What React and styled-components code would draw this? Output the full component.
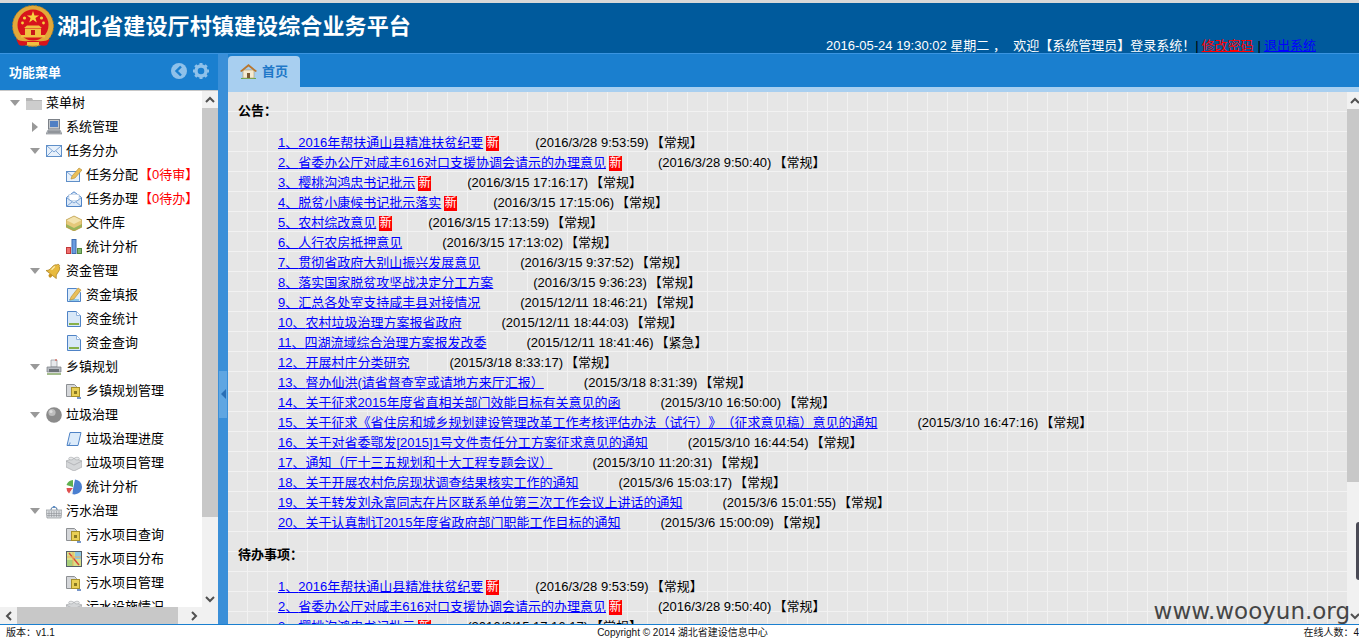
import React from 'react';
import styled, { createGlobalStyle } from 'styled-components';

const FONT = '"Liberation Sans", "Noto Sans CJK SC", sans-serif';

const GlobalStyle = createGlobalStyle`
  html, body { margin: 0; padding: 0; overflow: hidden; background: #fff; }
  body { font-family: ${FONT}; font-size: 13px; color: #000; text-spacing-trim: space-all; }
`;

const notices = [
  ['2016年帮扶通山县精准扶贫纪要', '(2016/3/28 9:53:59)', '常规', true],
  ['省委办公厅对咸丰616对口支援协调会请示的办理意见', '(2016/3/28 9:50:40)', '常规', true],
  ['樱桃沟鸿忠书记批示', '(2016/3/15 17:16:17)', '常规', true],
  ['脱贫小康候书记批示落实', '(2016/3/15 17:15:06)', '常规', true],
  ['农村综改意见', '(2016/3/15 17:13:59)', '常规', true],
  ['人行农房抵押意见', '(2016/3/15 17:13:02)', '常规'],
  ['贯彻省政府大别山振兴发展意见', '(2016/3/15 9:37:52)', '常规'],
  ['落实国家脱贫攻坚战决定分工方案', '(2016/3/15 9:36:23)', '常规'],
  ['汇总各处室支持咸丰县对接情况', '(2015/12/11 18:46:21)', '常规'],
  ['农村垃圾治理方案报省政府', '(2015/12/11 18:44:03)', '常规'],
  ['四湖流域综合治理方案报发改委', '(2015/12/11 18:41:46)', '紧急'],
  ['开展村庄分类研究', '(2015/3/18 8:33:17)', '常规'],
  ['督办仙洪(请省督查室或请地方来厅汇报）', '(2015/3/18 8:31:39)', '常规'],
  ['关于征求2015年度省直相关部门效能目标有关意见的函', '(2015/3/10 16:50:00)', '常规'],
  ['关于征求《省住房和城乡规划建设管理改革工作考核评估办法（试行）》（征求意见稿）意见的通知', '(2015/3/10 16:47:16)', '常规'],
  ['关于对省委鄂发[2015]1号文件责任分工方案征求意见的通知', '(2015/3/10 16:44:54)', '常规'],
  ['通知（厅十三五规划和十大工程专题会议）', '(2015/3/10 11:20:31)', '常规'],
  ['关于开展农村危房现状调查结果核实工作的通知', '(2015/3/6 15:03:17)', '常规'],
  ['关于转发刘永富同志在片区联系单位第三次工作会议上讲话的通知', '(2015/3/6 15:01:55)', '常规'],
  ['关于认真制订2015年度省政府部门职能工作目标的通知', '(2015/3/6 15:00:09)', '常规'],
];

const todos = notices.slice(0, 3);

const tree = [
  [0, 'open', 'folder', '菜单树'],
  [1, 'closed', 'computer', '系统管理'],
  [1, 'open', 'mail', '任务分办'],
  [2, '', 'mailPen', '任务分配', '【0待审】'],
  [2, '', 'mailOpen', '任务办理', '【0待办】'],
  [2, '', 'box', '文件库'],
  [2, '', 'bars', '统计分析'],
  [1, 'open', 'bell', '资金管理'],
  [2, '', 'docPen', '资金填报'],
  [2, '', 'doc', '资金统计'],
  [2, '', 'doc', '资金查询'],
  [1, 'open', 'printer', '乡镇规划'],
  [2, '', 'lockDoc', '乡镇规划管理'],
  [1, 'open', 'ball', '垃圾治理'],
  [2, '', 'scroll', '垃圾治理进度'],
  [2, '', 'brick', '垃圾项目管理'],
  [2, '', 'pie', '统计分析'],
  [1, 'open', 'basket', '污水治理'],
  [2, '', 'lockDoc', '污水项目查询'],
  [2, '', 'map', '污水项目分布'],
  [2, '', 'lockDoc', '污水项目管理'],
  [2, '', 'brick', '污水设施情况'],
];

const icons = {
  folder: <>
    <path d="M0 3h6l1 2h9v10H0z" fill="#b5b5b5" />
    <path d="M0 6h16v9H0z" fill="#cdcdcd" />
  </>,
  computer: <>
    <rect x="2.5" y="0.5" width="11" height="9.5" fill="#c4c8cc" stroke="#7c8188" />
    <rect x="4" y="2" width="8" height="6" fill="#4f7fc4" />
    <path d="M2 11h12l2 4H0z" fill="#b4b8bd" stroke="#7c8188" strokeWidth=".6" />
    <path d="M2 13h12" stroke="#6e7278" />
  </>,
  mail: <>
    <rect x=".5" y="2.5" width="15" height="11" fill="#e8f1fb" stroke="#5f8fc8" />
    <path d="M1 3l7 6 7-6M1 13l5-5M15 13l-5-5" fill="none" stroke="#7fa6d6" />
  </>,
  mailPen: <>
    <rect x=".5" y="4.5" width="13" height="10" fill="#e8f1fb" stroke="#5f8fc8" />
    <path d="M1 5l6 5 6-5" fill="none" stroke="#7fa6d6" />
    <path d="M6 9l7-8 3 2-7 8-4 1z" fill="#e9bf5a" stroke="#b58a2c" strokeWidth=".6" />
  </>,
  mailOpen: <>
    <path d="M.5 6.5L8 .8l7.5 5.7v9H.5z" fill="#dce9f8" stroke="#4f83c6" />
    <rect x="3" y="3.5" width="10" height="6" fill="#fff" stroke="#b9cbe2" strokeWidth=".6" />
    <path d="M1 7l7 5 7-5M1 15l5-4M15 15l-5-4" fill="none" stroke="#7fa6d6" />
  </>,
  box: <>
    <path d="M8 1l8 4v7l-8 4-8-4V5z" fill="#e5c87a" />
    <path d="M0 5l8 4 8-4-8-4z" fill="#f3e3ae" />
    <path d="M0 9l8 4 8-4v3l-8 4-8-4z" fill="#9ab55a" />
    <path d="M8 1l8 4v7l-8 4-8-4V5z" fill="none" stroke="#b8963f" strokeWidth=".7" />
  </>,
  bars: <>
    <rect x=".5" y="8.5" width="4" height="6" fill="#ef6f6f" stroke="#c23a3a" />
    <rect x="6" y=".5" width="4" height="14" fill="#6a9be0" stroke="#3d6bb0" />
    <rect x="11.5" y="9.5" width="4" height="5" fill="#84b86e" stroke="#55883f" />
  </>,
  bell: <g transform="rotate(38 8 8)">
    <path d="M8 0c1 0 1.4.6 1.4 1.4C11.4 2 12 4.5 12 7c0 3 1 4 2.5 5.5h-13C3 11 4 10 4 7c0-2.5.6-5 2.6-5.6C6.6.6 7 0 8 0z" fill="#e8ba3e" stroke="#a87e1e" strokeWidth=".7" />
    <path d="M6 4c-.5 1.5-.5 3-.8 4.5" fill="none" stroke="#fbeeb8" strokeWidth="1.2" />
    <circle cx="8" cy="14" r="1.8" fill="#c9931f" />
  </g>,
  docPen: <>
    <path d="M1.5 1.5h9l4 4v9h-13z" fill="#dcebfa" stroke="#4f83c6" />
    <rect x="3" y="12" width="10" height="2" fill="#8cc7ea" />
    <path d="M5 10l7-9 3 2-7 9-4 1z" fill="#e9bf5a" stroke="#b58a2c" strokeWidth=".6" />
  </>,
  doc: <>
    <path d="M1.5 .5h9l4 4v11h-13z" fill="#d8e8f8" stroke="#4f83c6" />
    <path d="M10.5 .5v4h4" fill="#fff" stroke="#8fb2dd" />
    <rect x="3" y="12" width="10" height="2" fill="#86b04a" />
  </>,
  printer: <>
    <path d="M5 1h6v7H5z" fill="#e7e9ec" stroke="#8c9298" strokeWidth=".7" />
    <path d="M10 0v2" stroke="#d84a3c" />
    <path d="M1 8h14v5H1z" fill="#b8bcc2" stroke="#777c82" strokeWidth=".7" />
    <path d="M3 10h10v3H3z" fill="#6d7278" />
    <path d="M1 15h14" stroke="#7ba05a" strokeWidth="1.4" />
  </>,
  lockDoc: <>
    <path d="M.5 1.5h8l2 2v10h-10z" fill="#d5d7da" stroke="#8d9094" />
    <rect x="5.5" y="4.5" width="8" height="9" fill="#e8cf55" stroke="#a58f2c" />
    <rect x="8" y="8" width="3" height="3" fill="#8a7a22" />
    <path d="M11 15h4" stroke="#4a73b8" strokeWidth="1.5" />
  </>,
  ball: <>
    <circle cx="8" cy="8" r="7.8" fill="#8b8b8b" />
    <circle cx="6" cy="5.5" r="3.6" fill="#bdbdbd" />
    <circle cx="5" cy="4.5" r="1.6" fill="#dedede" />
  </>,
  scroll: <>
    <path d="M4 1.5h11l-3 13H1z" fill="#dcebfa" stroke="#4f83c6" />
    <path d="M1 14.5c2 0 3-1 3-3" fill="none" stroke="#4f83c6" />
  </>,
  brick: <>
    <path d="M8 3l8 3v6l-8 4-8-4V6z" fill="#d4d6d8" stroke="#a6a9ac" strokeWidth=".7" />
    <path d="M0 6l8 4 8-4" fill="none" stroke="#a6a9ac" strokeWidth=".7" />
    <ellipse cx="5" cy="3.6" rx="2.3" ry="1.4" fill="#e8e9ea" stroke="#a6a9ac" strokeWidth=".6" />
    <ellipse cx="11" cy="3.6" rx="2.3" ry="1.4" fill="#e8e9ea" stroke="#a6a9ac" strokeWidth=".6" />
  </>,
  pie: <>
    <path d="M7 8V1a7.5 7.5 0 0 0-6.5 5z" fill="#5fb050" />
    <path d="M7 9H.5a7 7 0 0 0 2.5 5.5z" fill="#e05050" />
    <path d="M6 15a7.5 7.5 0 0 0 10-7A7.5 7.5 0 0 0 9 .5z" fill="#4a7fd0" />
    <path d="M3.5 14.5l3-5.5v6z" fill="#f2f2f2" />
  </>,
  basket: <>
    <path d="M5 7a3 3 0 0 1 6 0" fill="none" stroke="#6f8fb3" strokeWidth="1.2" />
    <path d="M7 3h2v2H7z" fill="#5f8fc8" />
    <path d="M0 7h16l-1 8H1z" fill="#d9dcdf" stroke="#8e9297" strokeWidth=".7" />
    <path d="M3 8v6M5.5 8v6M8 8v6M10.5 8v6M13 8v6M1 10.5h14M1 12.5h14" stroke="#8e9297" strokeWidth=".6" />
  </>,
  map: <>
    <rect x=".5" y=".5" width="15" height="15" fill="#d8e08a" stroke="#55606a" />
    <path d="M9 1h6v7H9z" fill="#8fc7e0" />
    <path d="M1 9h6v6H1z" fill="#a8cf7a" />
    <path d="M3 2l10 12" stroke="#d84a3c" strokeWidth="1.5" />
    <path d="M1 6h14M7 1v14" stroke="#eeb35a" />
  </>,
};

const Icon16 = ({ name }) => (
  <svg width="16" height="16" viewBox="0 0 16 16">{icons[name]}</svg>
);

const Emblem = () => (
  <svg width="44" height="44" viewBox="0 0 44 44">
    <circle cx="22" cy="21" r="20.5" fill="#e2a93a" />
    <circle cx="22" cy="21" r="20.5" fill="none" stroke="#b57f20" strokeDasharray="2 1.5" />
    <circle cx="22" cy="20" r="15.5" fill="#d8141c" />
    <path d="M22 6l1.5 4.4h4.6l-3.7 2.7 1.4 4.4-3.8-2.7-3.8 2.7 1.4-4.4-3.7-2.7h4.6z" fill="#f7d23e" />
    <circle cx="13.5" cy="13" r="1.6" fill="#f7d23e" />
    <circle cx="30.5" cy="13" r="1.6" fill="#f7d23e" />
    <circle cx="11.5" cy="18" r="1.4" fill="#f7d23e" />
    <circle cx="32.5" cy="18" r="1.4" fill="#f7d23e" />
    <path d="M13 23l3-2.5h12l3 2.5zM14 23.5h16V30H14zM10 30h24v2.5H10z" fill="#f0c040" />
    <path d="M20 25h4v5h-4z" fill="#c8141a" />
    <path d="M5 34c5 3 9 2 17 2s12 1 17-2l-3 6c-4 2-8-1-14-1s-10 3-14 1z" fill="#d8141c" />
    <path d="M16 37h12v3H16z" fill="#f0c040" />
  </svg>
);

const HomeIcon = () => (
  <svg width="17" height="16" viewBox="0 0 17 16">
    <path d="M1 15h15v1H1z" fill="#6aa84f" />
    <path d="M3 7h11v8H3z" fill="#f4ead2" stroke="#b39a6a" strokeWidth=".6" />
    <path d="M7 10h3v5H7z" fill="#7a5a32" />
    <path d="M0 8L8.5 1 17 8l-1.5 1L8.5 3.5 1.5 9z" fill="#b9762d" />
  </svg>
);

const Chevron = ({ dir }) => {
  const d = {
    up: 'M1 7l4-4 4 4',
    down: 'M1 3l4 4 4-4',
    left: 'M7 1L3 5l4 4',
    right: 'M3 1l4 4-4 4',
  }[dir];
  return (
    <svg width="10" height="10" viewBox="0 0 10 10">
      <path d={d} fill="none" stroke="#505050" strokeWidth="2" />
    </svg>
  );
};

const Page = styled.div`
  position: relative;
  width: 100%;
  height: 640px;
  display: flex;
  flex-direction: column;
  overflow: hidden;
`;

const Header = styled.header`
  height: 50px;
  border-top: 3px solid #d8d8d8;
  background: #005a9c;
  display: flex;
  justify-content: space-between;
  padding: 0 43px 0 11px;
`;

const Brand = styled.div`
  display: flex;
  align-items: center;
  gap: 2px;
  padding-bottom: 3px;
`;

const BrandTitle = styled.h1`
  margin: 0;
  font-size: 22px;
  font-weight: 700;
  letter-spacing: .12px;
  line-height: 30px;
  color: #fff;
  white-space: nowrap;
`;

const Welcome = styled.div`
  align-self: flex-end;
  font-size: 13px;
  line-height: 14px;
  color: #fff;
  white-space: pre;
`;

const Sep = styled.span`
  color: #000;
  margin: 0 3px 0 ${(p) => p.$left}px;
`;

const TopLink = styled.a`
  color: ${(p) => p.$color};
  text-decoration: underline;
`;

const Middle = styled.div`
  flex: 1;
  min-height: 0;
  display: flex;
  border-top: 1px solid #3a94e0;
`;

const Sidebar = styled.aside`
  width: 218px;
  flex-shrink: 0;
  display: flex;
  flex-direction: column;
  background: #fff;
`;

const SideHead = styled.div`
  height: 34px;
  flex-shrink: 0;
  border-bottom: 1px solid #c8c8c8;
  background: #1a7fcf;
  display: flex;
  align-items: center;
  justify-content: space-between;
  padding: 0 9px 2px;
  box-sizing: content-box;
`;

const SideTitle = styled.div`
  font-size: 13px;
  font-weight: 700;
  color: #fff;
`;

const HeadTools = styled.div`
  display: flex;
  gap: 6px;
`;

const SideBody = styled.div`
  flex: 1;
  min-height: 0;
  display: grid;
  grid-template-columns: 202px 16px;
  grid-template-rows: 1fr 17px;
`;

const TreeView = styled.div`
  overflow: hidden;
  min-height: 0;
`;

const TreeRow = styled.div`
  height: 24px;
  display: flex;
  align-items: center;
  padding-left: ${(p) => 10 + p.$level * 20}px;
  white-space: nowrap;
`;

const ArrowSlot = styled.span`
  width: 16px;
  height: 16px;
  flex-shrink: 0;
  display: flex;
  align-items: center;
`;

const Caret = styled.span`
  display: block;
  width: 0;
  height: 0;
  ${(p) => (p.$open
    ? `border-left: 5px solid transparent;
       border-right: 5px solid transparent;
       border-top: 6px solid #999;`
    : `border-top: 5px solid transparent;
       border-bottom: 5px solid transparent;
       border-left: 6px solid #999;
       margin-left: 2px;`)}
`;

const TreeLabel = styled.span`
  margin-left: 4px;
  line-height: 18px;
`;

const TreeTag = styled.span`
  margin-left: 1px;
  color: #f00;
`;

const BarY = styled.div`
  width: 16px;
  flex-shrink: 0;
  display: flex;
  flex-direction: column;
  background: #f1f1f1;
  min-height: 0;
`;

const BarButton = styled.div`
  height: 17px;
  flex-shrink: 0;
  display: flex;
  align-items: center;
  justify-content: center;
`;

const BarSpacer = styled.div`
  flex: 1;
`;

const ThumbY = styled.div`
  height: ${(p) => p.$size}px;
  flex-shrink: 0;
  background: #c8c8c8;
`;

const BarX = styled.div`
  grid-column: 1;
  display: flex;
  background: #f1f1f1;
`;

const BarXButton = styled(BarButton)`
  width: 17px;
`;

const ThumbX = styled.div`
  width: 161px;
  background: #c8c8c8;
`;

const Corner = styled.div`
  background: #f1f1f1;
`;

const Splitter = styled.div`
  width: 10px;
  flex-shrink: 0;
  background: #3a8fd8;
  display: flex;
  align-items: center;
  padding-top: 110px;
  box-sizing: border-box;
  justify-content: center;
`;

const SplitHandle = styled.div`
  width: 8px;
  height: 47px;
  background: #5fa6e2;
  display: flex;
  align-items: center;
  justify-content: center;
`;

const SplitArrow = styled.span`
  width: 0;
  height: 0;
  border-top: 5px solid transparent;
  border-bottom: 5px solid transparent;
  border-right: 5px solid #2a6fb5;
`;

const Main = styled.main`
  flex: 1;
  min-width: 0;
  display: flex;
  flex-direction: column;
`;

const TabBar = styled.div`
  height: 32px;
  padding-top: 1px;
  flex-shrink: 0;
  background: #1a7fcf;
  border-bottom: 5px solid #a8cff0;
  display: flex;
  align-items: flex-end;
`;

const Tab = styled.div`
  width: 72px;
  height: 31px;
  border-radius: 4px 4px 0 0;
  background: #a8cff0;
  display: flex;
  align-items: center;
  gap: 5px;
  padding: 0 0 2px 12px;
  box-sizing: border-box;
  font-size: 13px;
  font-weight: 700;
  color: #1f78c8;
`;

const MainBody = styled.div`
  flex: 1;
  min-height: 0;
  display: flex;
  margin-right: -4px;
`;

const Content = styled.div`
  flex: 1;
  min-width: 0;
  overflow: hidden;
  padding-left: 10px;
  background-color: #e6e6e6;
  background-image:
    linear-gradient(to right, transparent 19px, #f2f2f2 19px),
    linear-gradient(to bottom, transparent 19px, #f2f2f2 19px);
  background-size: 20px 20px;
`;

const Heading = styled.div`
  font-size: 13px;
  font-weight: 700;
  line-height: 20px;
  padding: ${(p) => (p.$first ? '9px 0 12px' : '12px 0')};
`;

const NoticeList = styled.ul`
  list-style: none;
  margin: 0;
  padding: 0 0 0 40px;
`;

const NoticeRow = styled.li`
  height: 20px;
  line-height: 20px;
  display: flex;
  align-items: center;
  white-space: nowrap;
`;

const NoticeLink = styled.a`
  color: #00f;
  text-decoration: underline;
`;

const NewBadge = styled.span`
  width: 13px;
  height: 15px;
  margin: 0 -4px 0 3px;
  background: #f00;
  color: #fff;
  font-size: 12px;
  line-height: 15px;
  text-align: center;
  overflow: hidden;
`;

const NoticeDate = styled.span`
  margin-left: 40px;
`;

const NoticeTag = styled.span`
  margin-left: 2px;
`;

const Footer = styled.footer`
  height: 15px;
  flex-shrink: 0;
  border-top: 1px solid #1a7fcf;
  background: #fff;
  display: grid;
  grid-template-columns: 1fr auto 1fr;
  align-items: center;
  padding-left: 6px;
  font-size: 10px;
  line-height: 15px;
  color: #111;
`;

const FooterRight = styled.div`
  justify-self: end;
`;

const Watermark = styled.div`
  position: absolute;
  right: 9px;
  top: 597px;
  font-family: "DejaVu Sans", sans-serif;
  font-size: 23px;
  line-height: 28px;
  color: #454545;
  white-space: nowrap;
`;

const EdgeWidget = styled.div`
  position: absolute;
  right: 0;
  top: 522px;
  width: 3px;
  height: 58px;
  border-radius: 4px 0 0 4px;
  background: #4a4a55;
`;

const Notices = ({ items }) => (
  <NoticeList>
    {items.map(([title, date, tag, isNew], i) => (
      <NoticeRow key={i}>
        <NoticeLink href="#">{i + 1}、{title}</NoticeLink>
        {isNew && <NewBadge>新</NewBadge>}
        <NoticeDate>{date}</NoticeDate>
        <NoticeTag>【{tag}】</NoticeTag>
      </NoticeRow>
    ))}
  </NoticeList>
);

export default function App() {
  return (
    <Page>
      <GlobalStyle />
      <Header>
        <Brand>
          <Emblem />
          <BrandTitle>湖北省建设厅村镇建设综合业务平台</BrandTitle>
        </Brand>
        <Welcome>
          {'2016-05-24 19:30:02 星期二 ，  欢迎【系统管理员】登录系统！'}
          <Sep $left={0}>|</Sep>
          <TopLink href="#" $color="#f00">修改密码</TopLink>
          <Sep $left={4}>|</Sep>
          <TopLink href="#" $color="#00f">退出系统</TopLink>
        </Welcome>
      </Header>
      <Middle>
        <Sidebar>
          <SideHead>
            <SideTitle>功能菜单</SideTitle>
            <HeadTools>
              <svg width="16" height="16" viewBox="0 0 16 16">
                <circle cx="8" cy="8" r="8" fill="#8fc1ea" />
                <path d="M10 3.5L5.5 8l4.5 4.5" fill="none" stroke="#1a7fcf" strokeWidth="2.4" />
              </svg>
              <svg width="16" height="16" viewBox="0 0 16 16">
                <circle cx="8" cy="8" r="5" fill="none" stroke="#8fc1ea" strokeWidth="3.4" />
                <path d="M8 0v3M8 13v3M0 8h3M13 8h3M2.3 2.3l2.2 2.2M11.5 11.5l2.2 2.2M2.3 13.7l2.2-2.2M11.5 4.5l2.2-2.2" stroke="#8fc1ea" strokeWidth="3" />
              </svg>
            </HeadTools>
          </SideHead>
          <SideBody>
            <TreeView>
              {tree.map(([level, state, icon, label, tag], i) => (
                <TreeRow key={i} $level={level}>
                  <ArrowSlot>
                    {state && <Caret $open={state === 'open'} />}
                  </ArrowSlot>
                  <Icon16 name={icon} />
                  <TreeLabel>
                    {label}
                    {tag && <TreeTag>{tag}</TreeTag>}
                  </TreeLabel>
                </TreeRow>
              ))}
            </TreeView>
            <BarY>
              <BarButton><Chevron dir="up" /></BarButton>
              <ThumbY $size={409} />
              <BarSpacer />
              <BarButton><Chevron dir="down" /></BarButton>
            </BarY>
            <BarX>
              <BarXButton><Chevron dir="left" /></BarXButton>
              <ThumbX />
              <BarSpacer />
              <BarXButton><Chevron dir="right" /></BarXButton>
            </BarX>
            <Corner />
          </SideBody>
        </Sidebar>
        <Splitter>
          <SplitHandle><SplitArrow /></SplitHandle>
        </Splitter>
        <Main>
          <TabBar>
            <Tab><HomeIcon />首页</Tab>
          </TabBar>
          <MainBody>
            <Content>
              <Heading $first>公告：</Heading>
              <Notices items={notices} />
              <Heading>待办事项：</Heading>
              <Notices items={todos} />
            </Content>
            <BarY>
              <BarButton><Chevron dir="up" /></BarButton>
              <ThumbY $size={373} />
              <BarSpacer />
              <BarButton><Chevron dir="down" /></BarButton>
            </BarY>
          </MainBody>
        </Main>
      </Middle>
      <Footer>
        <div>版本：v1.1</div>
        <div>Copyright © 2014 湖北省建设信息中心</div>
        <FooterRight>在线人数：4</FooterRight>
      </Footer>
      <Watermark>www.wooyun.org</Watermark>
      <EdgeWidget />
    </Page>
  );
}
